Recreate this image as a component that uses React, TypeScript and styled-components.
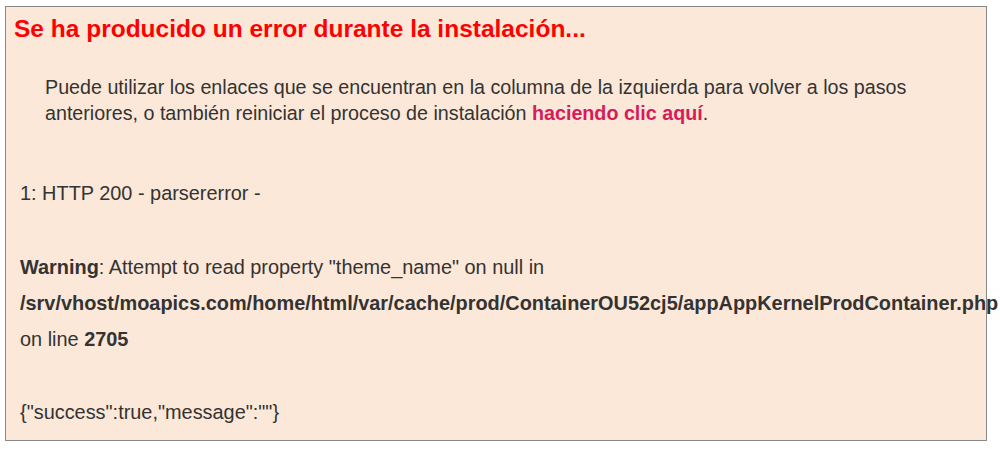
import React from "react";
import styled, { createGlobalStyle } from "styled-components";

const Global = createGlobalStyle`
  html, body { margin: 0; padding: 0; background: #ffffff; }
  body { font-family: "Liberation Sans", Arial, Helvetica, sans-serif; color: #333333; }
`;

const Panel = styled.div`
  box-sizing: border-box;
  margin: 6px 0 0 5px;
  width: 982px;
  height: 435px;
  border: 1.5px solid #888888;
  background: #fce8d8;
  padding: 6px 0 0 8px;
`;

const Title = styled.h2`
  margin: 0;
  font-size: 24.5px;
  line-height: 32px;
  font-weight: bold;
  color: #ff0000;
`;

const Intro = styled.p`
  margin: 29px 40px 0 31px;
  font-size: 19.7px;
  line-height: 26px;
  color: #333333;
`;

const Link = styled.a`
  color: #d81b5a;
  font-weight: bold;
  text-decoration: none;
`;

const Block = styled.div<{ $gap: number }>`
  margin: ${(p) => p.$gap}px 0 0 6px;
  font-size: 19.9px;
  line-height: 36px;
  color: #333333;
  white-space: nowrap;
`;

const Strong = styled.b`
  font-weight: bold;
`;

export default function App() {
  return (
    <>
      <Global />
      <Panel>
        <Title>Se ha producido un error durante la instalación...</Title>
        <Intro>
          Puede utilizar los enlaces que se encuentran en la columna de la izquierda para volver a los pasos
          anteriores, o también reiniciar el proceso de instalación <Link href="#">haciendo clic aquí</Link>.
        </Intro>
        <Block $gap={49}>1: HTTP 200 - parsererror -</Block>
        <Block $gap={38}>
          <div>
            <Strong>Warning</Strong>: Attempt to read property "theme_name" on null in
          </div>
          <div>
            <Strong>/srv/vhost/moapics.com/home/html/var/cache/prod/ContainerOU52cj5/appAppKernelProdContainer.php</Strong>
          </div>
          <div>
            on line <Strong>2705</Strong>
          </div>
        </Block>
        <Block $gap={37}>{'{"success":true,"message":""}'}</Block>
      </Panel>
    </>
  );
}
